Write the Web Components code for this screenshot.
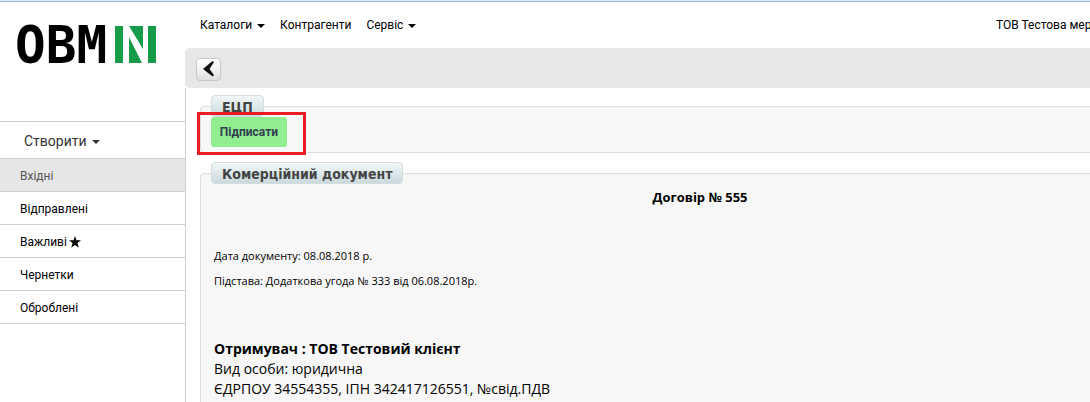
<!DOCTYPE html>
<html lang="uk">
<head>
<meta charset="utf-8">
<meta name="viewport" content="width=device-width, initial-scale=1">
<title>OBMIN</title>
<style>
html, body { height: 100%; margin: 0; }
body { background: #fff; color: #000; font-family: Roboto, sans-serif; font-size: 12px; overflow: hidden; }
</style>
</head>
<body>
<obmin-app></obmin-app>
<script>
function define(name, html, setup) {
  customElements.define(name, class extends HTMLElement {
    constructor() {
      super();
      const t = document.createElement('template');
      t.innerHTML = html;
      this.attachShadow({ mode: 'open' }).append(t.content.cloneNode(true));
    }
    connectedCallback() { if (setup) setup(this, this.shadowRoot); }
  });
}

define('obmin-logo', `
<style>
:host { display: block; padding: 24px 16px 55px; }
a { display: block; width: 141px; height: 40px; }
svg { display: block; overflow: visible; }
text { font: bold 51px "DejaVu Sans Mono", monospace; }
</style>
<a href="#" aria-label="OBMIN">
<svg width="141" height="40" viewBox="0 0 141 40">
<text x="-1" y="37">OBM</text>
<g fill="#169c48"><path d="M99 0h8v37h-8z"/><path d="M113 0h14v23z"/><path d="M113 11l13 26h-13z"/><path d="M132 0h8v37h-8z"/></g>
</svg></a>`);

define('menu-caret', `
<style>:host { display: inline-block; vertical-align: middle; margin-left: 5px; } svg { display: block; }</style>
<svg width="8" height="4" viewBox="0 0 8 4"><path d="M0 0h8L4 4z" fill="currentColor"/></svg>`);

define('side-item', `
<style>
:host { display: block; border-bottom: 1px solid #d0d0d0; }
:host([active]) { background: #e6e6e6; color: #555; }
a { display: flex; box-sizing: border-box; align-items: center; gap: 2px; height: 32px; padding: 2px 20px 0; color: inherit; text-decoration: none; }
</style>
<a href="#"><slot></slot></a>`);

define('side-bar', `
<style>
:host { display: flex; flex-direction: column; }
nav { flex: 1; }
button { display: block; width: 100%; height: 38px; padding: 2px 24px 0; border: solid #d0d0d0; border-width: 1px 0; background: none; color: #333; font: 14px/20px Roboto, sans-serif; text-align: left; }
</style>
<obmin-logo></obmin-logo>
<nav>
<button type="button">Створити<menu-caret></menu-caret></button>
<side-item active>Вхідні</side-item>
<side-item>Відправлені</side-item>
<side-item>Важливі<svg width="12" height="12" viewBox="0 0 12 12"><path d="M6 0l1.500 4.300H12L8.400 7l1.400 4.700L6 9l-3.800 2.700L3.600 7 0 4.300h4.500z"/></svg></side-item>
<side-item>Чернетки</side-item>
<side-item>Оброблені</side-item>
</nav>`);

define('top-bar', `
<style>
:host { display: flex; flex: none; align-items: center; justify-content: space-between; height: 46px; padding-left: 15px; white-space: nowrap; }
nav { display: flex; gap: 15px; }
a { color: inherit; text-decoration: none; }
.account { width: 94px; overflow: hidden; }
</style>
<nav><a href="#">Каталоги<menu-caret></menu-caret></a><a href="#">Контрагенти</a><a href="#">Сервіс<menu-caret></menu-caret></a></nav>
<a class="account" href="#">ТОВ Тестова мер</a>`);

define('tool-bar', `
<style>
:host { display: flex; flex: none; align-items: center; height: 40px; padding-left: 11px; background: #e7e7e7; border-radius: 5px 0 0 5px; }
button { display: grid; place-items: center; width: 25px; height: 23px; margin-top: 2px; padding: 0; border: 1px solid #c8c8c8; border-radius: 4px; background: linear-gradient(#fff, #f2f2f2 55%, #dedede); }
</style>
<button type="button" aria-label="Назад"><svg width="12" height="16" viewBox="0 0 12 16"><path d="M9.500 0l1.500 1-4.500 7 4.500 6-1.500 1.500L0 8z" fill="#111"/></svg></button>`);

define('group-box', `
<style>
:host { display: block; }
fieldset { box-sizing: border-box; height: 100%; min-width: 0; margin: 0; padding: 0 10px 5px; border: 1px solid #ddd; border-radius: 4px; background: #f7f7f7; }
legend { box-sizing: border-box; height: 22px; padding: 0 10px; border: 1px solid #d4dcde; border-radius: 4px; background: linear-gradient(#f2f7f8, #cbd9dd); color: #444; font: bold 14px/22px "DejaVu Sans Condensed", "DejaVu Sans", sans-serif; }
</style>
<fieldset><legend></legend><slot></slot></fieldset>`,
(el, root) => { root.querySelector('legend').textContent = el.getAttribute('label'); });

define('sign-button', `
<style>
:host { display: block; position: relative; width: 76px; }
button { display: block; width: 100%; height: 30px; padding: 0; border: 0; border-radius: 3px; background: #90ee90; color: #333f50; font: bold 12px/30px Roboto, sans-serif; }
.mark { position: absolute; inset: -5px -19px -8px -14px; border: 3px solid #ed1c24; pointer-events: none; }
</style>
<button type="button"><slot></slot></button><div class="mark"></div>`);

define('contract-doc', `
<style>
:host { display: block; padding: 3px; font: 11px/20px "Open Sans", "Noto Sans", sans-serif; }
h1 { margin: 0 0 39px; font-size: 13px; line-height: 20px; font-weight: bold; text-align: center; }
p { margin: 0 0 5px; }
.party { margin-top: 48px; font-size: 14px; }
strong { display: block; }
</style>
<h1>Договір № 555</h1>
<p>Дата документу: 08.08.2018 р.</p>
<p>Підстава: Додаткова угода № 333 від 06.08.2018р.</p>
<div class="party"><strong>Отримувач : ТОВ Тестовий клієнт</strong>Вид особи: юридична<br>ЄДРПОУ 34554355, ІПН 342417126551, №свід.ПДВ</div>`);

define('obmin-app', `
<style>
:host { display: grid; grid-template: minmax(0, 1fr) / 185px minmax(0, 1fr); box-sizing: border-box; height: 100%; padding-top: 1px; border-top: 1px solid #d9eafa; background: linear-gradient(#a3bdd6 1px, #fff 1px); }
main { display: flex; flex-direction: column; min-height: 0; overflow: hidden; }
.content { flex: 1 0 auto; display: flex; flex-direction: column; gap: 9px; margin-right: -110px; padding: 7px 0 0 14px; border-left: 1px solid #d0d0d0; }
.grow { flex: 1 0 auto; padding-bottom: 20px; }
</style>
<side-bar></side-bar>
<main>
<top-bar></top-bar>
<tool-bar></tool-bar>
<div class="content">
<group-box label="ЕЦП"><sign-button>Підписати</sign-button></group-box>
<group-box class="grow" label="Комерційний документ"><contract-doc></contract-doc></group-box>
</div>
</main>`);
</script>
</body>
</html>
